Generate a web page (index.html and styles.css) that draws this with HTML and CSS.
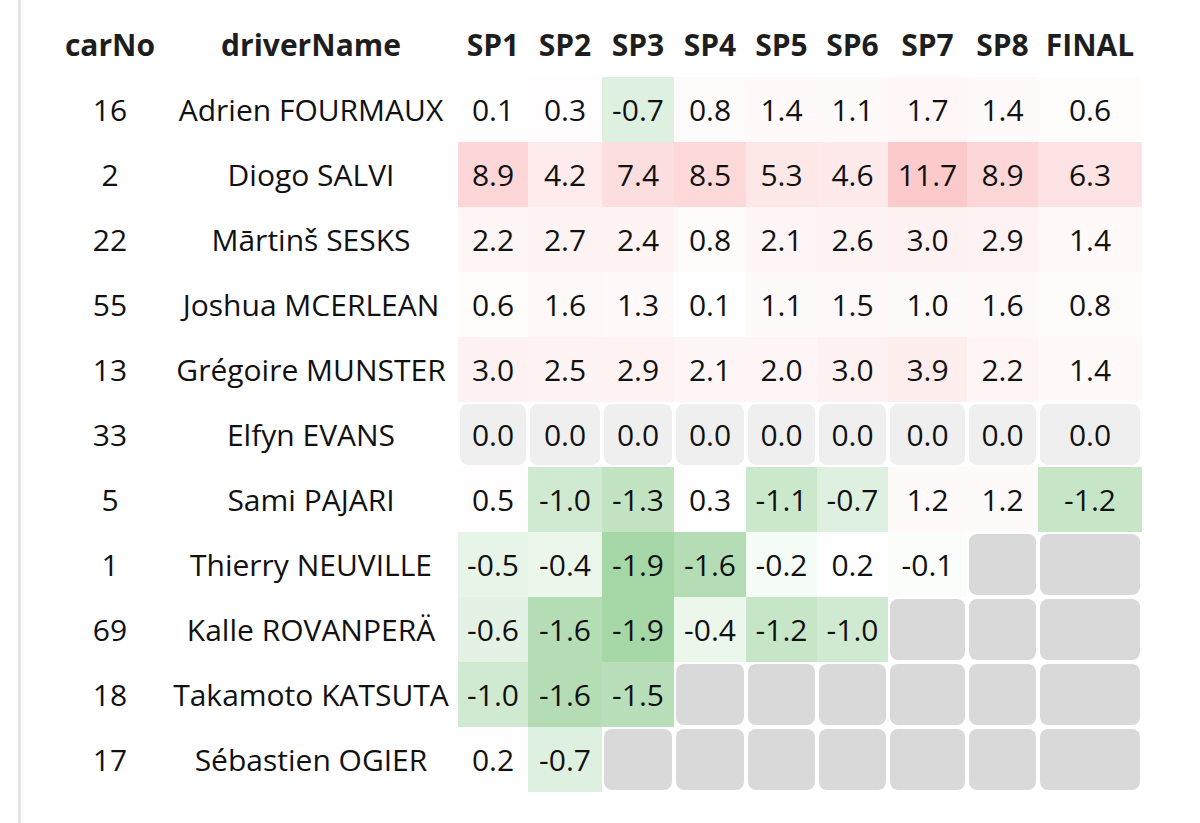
FILE: index.html
```html
<!DOCTYPE html>
<html>
<head>
<meta charset="utf-8">
<link rel="stylesheet" href="styles.css">
</head>
<body>
<div class="frame">
<table class="grid">
<colgroup>
<col class="w-car"><col class="w-name">
<col class="w-70"><col class="w-74"><col class="w-72"><col class="w-72"><col class="w-71"><col class="w-71"><col class="w-79"><col class="w-71"><col class="w-104">
</colgroup>
<thead>
<tr><th>carNo</th><th>driverName</th><th>SP1</th><th>SP2</th><th>SP3</th><th>SP4</th><th>SP5</th><th>SP6</th><th>SP7</th><th>SP8</th><th>FINAL</th></tr>
</thead>
<tbody>
<tr><td>16</td><td>Adrien FOURMAUX</td>
<td style="background:rgba(240,0,0,.002)">0.1</td><td style="background:rgba(240,0,0,.006)">0.3</td><td style="background:rgba(76,175,80,.184)">-0.7</td><td style="background:rgba(240,0,0,.014)">0.8</td><td style="background:rgba(240,0,0,.025)">1.4</td><td style="background:rgba(240,0,0,.019)">1.1</td><td style="background:rgba(240,0,0,.030)">1.7</td><td style="background:rgba(240,0,0,.025)">1.4</td><td style="background:rgba(240,0,0,.011)">0.6</td></tr>
<tr><td>2</td><td>Diogo SALVI</td>
<td style="background:rgba(240,0,0,.157)">8.9</td><td style="background:rgba(240,0,0,.074)">4.2</td><td style="background:rgba(240,0,0,.131)">7.4</td><td style="background:rgba(240,0,0,.150)">8.5</td><td style="background:rgba(240,0,0,.094)">5.3</td><td style="background:rgba(240,0,0,.081)">4.6</td><td style="background:rgba(240,0,0,.207)">11.7</td><td style="background:rgba(240,0,0,.157)">8.9</td><td style="background:rgba(240,0,0,.111)">6.3</td></tr>
<tr><td>22</td><td>Mārtinš SESKS</td>
<td style="background:rgba(240,0,0,.039)">2.2</td><td style="background:rgba(240,0,0,.048)">2.7</td><td style="background:rgba(240,0,0,.042)">2.4</td><td style="background:rgba(240,0,0,.014)">0.8</td><td style="background:rgba(240,0,0,.037)">2.1</td><td style="background:rgba(240,0,0,.046)">2.6</td><td style="background:rgba(240,0,0,.053)">3.0</td><td style="background:rgba(240,0,0,.051)">2.9</td><td style="background:rgba(240,0,0,.025)">1.4</td></tr>
<tr><td>55</td><td>Joshua MCERLEAN</td>
<td style="background:rgba(240,0,0,.011)">0.6</td><td style="background:rgba(240,0,0,.028)">1.6</td><td style="background:rgba(240,0,0,.023)">1.3</td><td style="background:rgba(240,0,0,.002)">0.1</td><td style="background:rgba(240,0,0,.019)">1.1</td><td style="background:rgba(240,0,0,.027)">1.5</td><td style="background:rgba(240,0,0,.018)">1.0</td><td style="background:rgba(240,0,0,.028)">1.6</td><td style="background:rgba(240,0,0,.014)">0.8</td></tr>
<tr><td>13</td><td>Grégoire MUNSTER</td>
<td style="background:rgba(240,0,0,.053)">3.0</td><td style="background:rgba(240,0,0,.044)">2.5</td><td style="background:rgba(240,0,0,.051)">2.9</td><td style="background:rgba(240,0,0,.037)">2.1</td><td style="background:rgba(240,0,0,.035)">2.0</td><td style="background:rgba(240,0,0,.053)">3.0</td><td style="background:rgba(240,0,0,.069)">3.9</td><td style="background:rgba(240,0,0,.039)">2.2</td><td style="background:rgba(240,0,0,.025)">1.4</td></tr>
<tr><td>33</td><td>Elfyn EVANS</td>
<td class="zero">0.0</td><td class="zero">0.0</td><td class="zero">0.0</td><td class="zero">0.0</td><td class="zero">0.0</td><td class="zero">0.0</td><td class="zero">0.0</td><td class="zero">0.0</td><td class="zero">0.0</td></tr>
<tr><td>5</td><td>Sami PAJARI</td>
<td style="background:rgba(240,0,0,.009)">0.5</td><td style="background:rgba(76,175,80,.263)">-1.0</td><td style="background:rgba(76,175,80,.342)">-1.3</td><td style="background:rgba(240,0,0,.005)">0.3</td><td style="background:rgba(76,175,80,.289)">-1.1</td><td style="background:rgba(76,175,80,.184)">-0.7</td><td style="background:rgba(240,0,0,.021)">1.2</td><td style="background:rgba(240,0,0,.021)">1.2</td><td style="background:rgba(76,175,80,.316)">-1.2</td></tr>
<tr><td>1</td><td>Thierry NEUVILLE</td>
<td style="background:rgba(76,175,80,.132)">-0.5</td><td style="background:rgba(76,175,80,.105)">-0.4</td><td style="background:rgba(76,175,80,.5)">-1.9</td><td style="background:rgba(76,175,80,.421)">-1.6</td><td style="background:rgba(76,175,80,.053)">-0.2</td><td style="background:rgba(240,0,0,.004)">0.2</td><td style="background:rgba(76,175,80,.026)">-0.1</td><td class="empty"></td><td class="empty"></td></tr>
<tr><td>69</td><td>Kalle ROVANPERÄ</td>
<td style="background:rgba(76,175,80,.158)">-0.6</td><td style="background:rgba(76,175,80,.421)">-1.6</td><td style="background:rgba(76,175,80,.5)">-1.9</td><td style="background:rgba(76,175,80,.105)">-0.4</td><td style="background:rgba(76,175,80,.316)">-1.2</td><td style="background:rgba(76,175,80,.263)">-1.0</td><td class="empty"></td><td class="empty"></td><td class="empty"></td></tr>
<tr><td>18</td><td>Takamoto KATSUTA</td>
<td style="background:rgba(76,175,80,.263)">-1.0</td><td style="background:rgba(76,175,80,.421)">-1.6</td><td style="background:rgba(76,175,80,.395)">-1.5</td><td class="empty"></td><td class="empty"></td><td class="empty"></td><td class="empty"></td><td class="empty"></td><td class="empty"></td></tr>
<tr><td>17</td><td>Sébastien OGIER</td>
<td style="background:rgba(240,0,0,.004)">0.2</td><td style="background:rgba(76,175,80,.184)">-0.7</td><td class="empty"></td><td class="empty"></td><td class="empty"></td><td class="empty"></td><td class="empty"></td><td class="empty"></td><td class="empty"></td></tr>
</tbody>
</table>
</div>
</body>
</html>
```

FILE: styles.css
```css
html, body {
  margin: 0;
  padding: 0;
  background: #ffffff;
}

body {
  font-family: "Open Sans", "DejaVu Sans", sans-serif;
  color: #111111;
}

.frame {
  margin-left: 18px;
  border-left: 3px solid #e4e4e4;
  padding: 12px 0 0 35px;
  min-height: 100vh;
  box-sizing: border-box;
}

.grid {
  table-layout: fixed;
  width: 1086px;
  border-collapse: separate;
  border-spacing: 0;
  font-size: 30px;
}

.w-car { width: 108px; }
.w-name { width: 294px; }
.w-70 { width: 70px; }
.w-71 { width: 71px; }
.w-72 { width: 72px; }
.w-74 { width: 74px; }
.w-79 { width: 79px; }
.w-104 { width: 104px; }

.grid th,
.grid td {
  border: 2px solid transparent;
  padding: 10px 0;
  line-height: 41px;
  text-align: center;
  white-space: nowrap;
  overflow: visible;
}

.grid th {
  font-weight: 700;
  color: #1e1e1e;
}

.grid td {
  font-weight: 400;
}

.grid td.zero,
.grid td.empty {
  background-clip: padding-box;
  border-radius: 10px;
}

.grid td.zero {
  background-color: #efefef;
}

.grid td.empty {
  background-color: #d9d9d9;
}
```
